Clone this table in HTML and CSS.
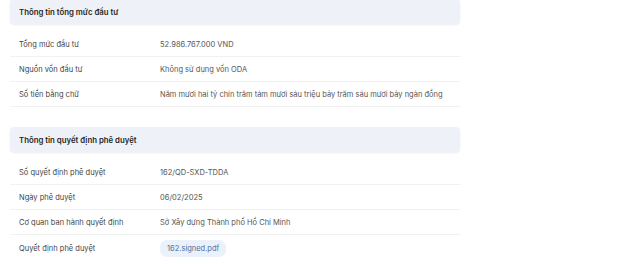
FILE: index.html
```html
<!DOCTYPE html>
<html lang="vi">
<head>
<meta charset="utf-8">
<link rel="stylesheet" href="styles.css">
</head>
<body>
<div class="page">
  <section class="group">
    <div class="group-head">Thông tin tổng mức đầu tư</div>
    <div class="rows">
      <div class="row"><div class="label">Tổng mức đầu tư</div><div class="value">52.986.767.000 VND</div></div>
      <div class="row"><div class="label">Nguồn vốn đầu tư</div><div class="value">Không sử dụng vốn ODA</div></div>
      <div class="row"><div class="label">Số tiền bằng chữ</div><div class="value">Năm mươi hai tỷ chín trăm tám mươi sáu triệu bảy trăm sáu mươi bảy ngàn đồng</div></div>
    </div>
  </section>
  <section class="group">
    <div class="group-head">Thông tin quyết định phê duyệt</div>
    <div class="rows">
      <div class="row"><div class="label">Số quyết định phê duyệt</div><div class="value">162/QD-SXD-TDDA</div></div>
      <div class="row"><div class="label">Ngày phê duyệt</div><div class="value">06/02/2025</div></div>
      <div class="row"><div class="label">Cơ quan ban hành quyết định</div><div class="value">Sở Xây dựng Thành phố Hồ Chí Minh</div></div>
      <div class="row row-file"><div class="label">Quyết định phê duyệt</div><div class="value"><span class="chip">162.signed.pdf</span></div></div>
    </div>
  </section>
</div>
</body>
</html>
```
FILE: styles.css
```css
html, body {
  margin: 0;
  padding: 0;
  background: #ffffff;
}
body {
  font-family: Inter, "Noto Sans", sans-serif;
  font-size: 7.5px;
  color: #4a4a4a;
}
.page {
  width: 450px;
  margin-left: 10px;
  margin-top: -1px;
  display: flex;
  flex-direction: column;
  gap: 20px;
}
.group-head {
  height: 25px;
  display: flex;
  align-items: center;
  padding-left: 9px;
  background: #eef2f8;
  border-radius: 4px;
  box-shadow: 0 1px 2px rgba(0, 0, 0, 0.08);
  font-size: 7.8px;
  font-weight: 600;
  color: #1f1f1f;
}
.rows {
  margin-top: 8px;
  display: flex;
  flex-direction: column;
}
.row {
  height: 25px;
  display: flex;
  align-items: center;
  border-bottom: 1px solid #f1f1f1;
  box-sizing: border-box;
}
.row-file {
  border-bottom: none;
  height: 26px;
}
.label {
  width: 141px;
  flex: none;
  padding-left: 9px;
  color: #444;
}
.value {
  color: #555;
  white-space: nowrap;
}
.chip {
  display: inline-block;
  padding: 4px 7px;
  border-radius: 7px;
  background: #eaf1fb;
  color: #4d6e9e;
}
```
